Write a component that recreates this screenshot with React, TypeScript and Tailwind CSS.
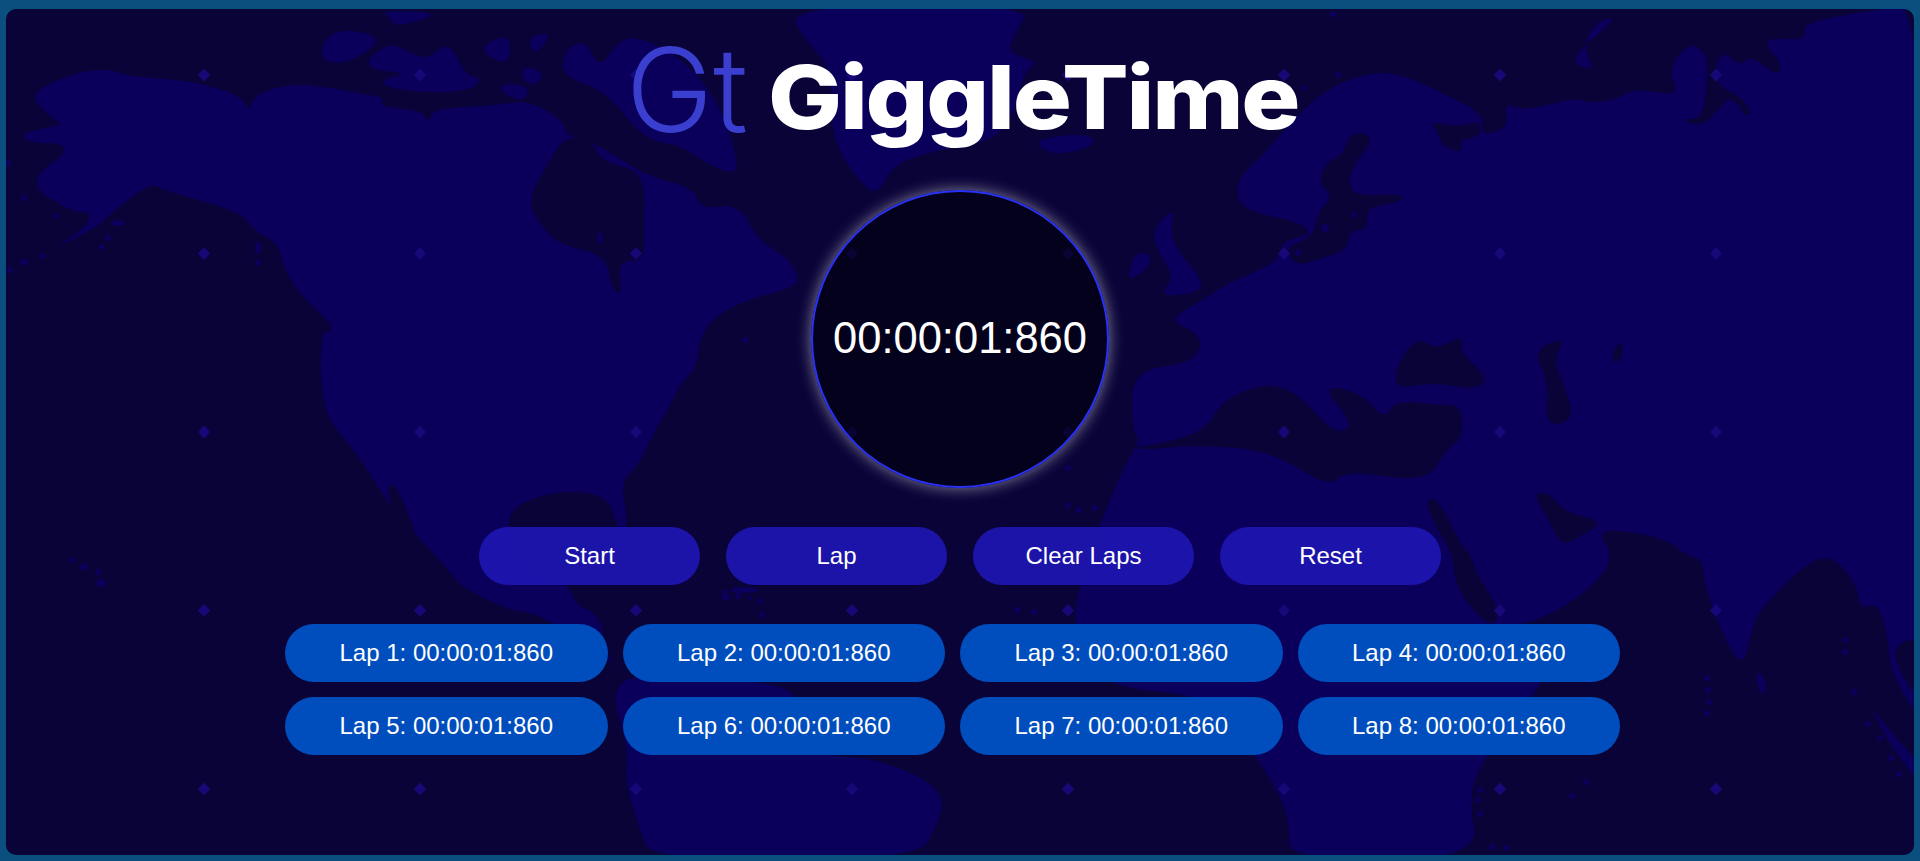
import React from 'react';

type Pt = [number, number];

const LAND = '#0a005c';
const SEA = '#0a0338';

const land: Pt[][] = [
  // north and central america
  [[29,98],[53,80],[102,67],[131,77],[188,80],[241,95],[249,113],[255,93],[300,82],[367,95],[384,97],[380,107],[420,110],[429,123],[433,110],[461,107],[500,105],[527,100],[563,120],[567,137],[590,140],[648,177],[693,187],[701,210],[738,203],[758,240],[787,258],[797,273],[797,287],[734,303],[701,330],[697,367],[681,383],[669,407],[650,440],[640,463],[620,483],[628,520],[622,535],[616,523],[608,497],[571,490],[531,498],[508,513],[510,540],[528,570],[570,585],[575,605],[600,615],[604,643],[610,660],[628,677],[604,655],[535,612],[514,612],[461,587],[451,573],[424,543],[392,510],[363,462],[337,430],[327,417],[320,377],[322,330],[331,333],[331,323],[298,293],[282,263],[278,243],[253,230],[241,212],[163,190],[151,183],[118,207],[98,227],[51,250],[86,227],[92,212],[73,212],[53,200],[37,190],[37,173],[65,155],[63,143],[29,143],[20,133],[63,125],[55,120]],
  // south america
  [[610,690],[640,672],[780,683],[800,700],[820,757],[868,757],[922,777],[944,797],[938,823],[918,860],[652,860],[640,830],[625,783],[629,750]],
  // arctic islands
  [[331,30],[367,32],[380,42],[359,57],[335,65],[318,55]],
  [[367,57],[392,43],[408,52],[428,60],[449,40],[465,75],[482,78],[471,90],[433,93],[388,88],[380,80],[408,73],[371,70]],
  [[396,27],[445,13],[380,10],[392,20]],
  [[478,47],[510,33],[510,60],[498,63]],
  [[527,37],[553,32],[535,57]],
  [[563,53],[584,38],[600,70],[618,40],[640,37],[685,60],[720,105],[735,150],[738,177],[700,160],[680,145],[644,140],[605,90],[563,77]],
  [[498,90],[506,83],[531,87],[522,103]],
  [[518,73],[531,65],[545,77],[531,87]],
  // greenland, iceland, british isles
  [[783,5],[811,47],[825,60],[832,87],[832,140],[860,183],[879,195],[893,163],[950,147],[995,140],[1015,110],[1025,70],[1040,62],[1007,53],[1015,33],[1032,5]],
  [[1032,140],[1080,133],[1097,140],[1085,150],[1050,155]],
  [[1126,283],[1134,253],[1150,253],[1150,267]],
  [[1154,227],[1175,207],[1170,233],[1179,253],[1203,280],[1198,293],[1158,297],[1175,277],[1155,247]],
  // eurasia and africa
  [[1240,210],[1236,180],[1265,153],[1317,93],[1374,70],[1411,78],[1435,90],[1484,113],[1480,137],[1509,127],[1504,103],[1521,110],[1549,105],[1574,98],[1590,103],[1615,100],[1635,88],[1680,97],[1668,70],[1688,43],[1704,50],[1708,67],[1704,110],[1696,120],[1680,118],[1700,128],[1721,107],[1729,97],[1741,107],[1743,115],[1753,115],[1741,97],[1721,87],[1713,73],[1723,50],[1741,67],[1750,55],[1778,77],[1782,63],[1766,47],[1770,38],[1807,40],[1802,23],[1872,10],[1925,5],[1925,640],[1900,640],[1892,660],[1925,710],[1914,712],[1890,670],[1888,637],[1878,602],[1860,610],[1858,587],[1833,555],[1806,563],[1758,612],[1753,627],[1741,675],[1706,593],[1702,558],[1688,557],[1664,537],[1594,527],[1615,557],[1590,590],[1541,620],[1510,625],[1530,640],[1558,642],[1541,687],[1484,757],[1468,797],[1480,860],[1288,860],[1290,825],[1280,795],[1260,763],[1250,750],[1211,695],[1097,687],[1073,623],[1079,590],[1101,520],[1126,463],[1140,440],[1132,430],[1132,370],[1195,363],[1203,335],[1167,320],[1203,300],[1228,283],[1277,263],[1283,240],[1312,235],[1300,222]],
  // sumatra, sri lanka, novaya zemlya
  [[1868,703],[1885,725],[1925,770],[1925,790],[1890,745]],
  [[1755,675],[1762,672],[1768,690],[1760,695]],
  [[1566,60],[1619,17],[1598,20],[1582,45],[1596,72]],
];

const seas: Pt[][] = [
  // hudson bay
  [[527,200],[551,158],[565,137],[590,138],[602,162],[645,172],[644,230],[644,262],[618,260],[622,295],[612,290],[606,255],[560,245],[540,225]],
  // gulf of california
  [[388,483],[398,487],[422,550],[404,537],[390,510]],
  // baltic
  [[1362,132],[1374,140],[1349,170],[1351,197],[1402,193],[1402,202],[1366,207],[1368,230],[1350,230],[1347,250],[1325,257],[1296,267],[1284,247],[1313,237],[1317,213],[1333,197],[1319,183],[1325,163],[1345,153],[1347,137]],
  // white sea
  [[1429,122],[1460,127],[1480,120],[1480,137],[1458,140],[1464,153],[1443,147],[1437,130]],
  // black sea, caspian, aral
  [[1419,337],[1435,350],[1464,335],[1460,353],[1488,377],[1476,390],[1431,382],[1394,390],[1398,360]],
  [[1533,350],[1566,337],[1553,360],[1566,390],[1574,420],[1545,427],[1549,383]],
  [[1612,352],[1622,340],[1622,358],[1614,364]],
  // mediterranean
  [[1128,447],[1150,446],[1205,432],[1222,400],[1268,382],[1300,395],[1335,435],[1355,425],[1320,385],[1360,392],[1385,420],[1395,400],[1440,405],[1462,405],[1462,440],[1447,448],[1427,483],[1345,470],[1329,488],[1270,450],[1190,445],[1150,450]],
  // red sea and persian gulf
  [[1425,498],[1439,500],[1458,540],[1472,557],[1476,573],[1496,603],[1498,623],[1484,623],[1455,587],[1453,553],[1435,527]],
  [[1533,493],[1549,493],[1566,513],[1594,518],[1598,527],[1578,537],[1562,547],[1545,513]],
];

// small islands drawn as dots on top of the sea
const islands: [number, number, number, number][] = [
  [73,560,3,3],[84,567,4,3],[98,572,3,3],[101,583,5,4],[24,198,3,3],[57,216,3,3],[108,238,3,3],[102,247,3,3],[43,256,3,3],[24,262,4,3],[10,270,3,3],[8,163,3,3],[118,223,7,3],[258,248,3,6],[258,263,3,3],
  [744,590,14,3],[726,597,5,3],[725,592,3,2],[725,598,2,2],[738,596,3,3],[750,598,2,2],[760,601,3,3],[762,615,3,3],[1017,610,3,3],[1034,612,3,3],[1068,468,3,3],[1068,505,3,3],[1079,510,3,3],[1095,508,3,3],
  [1480,790,3,3],[1478,800,3,3],[1480,814,3,3],[1492,847,3,3],[1506,848,3,3],[1572,796,3,3],[1586,782,3,3],[1707,678,3,3],[1708,690,3,3],[1709,702,3,3],[1707,713,3,3],[1845,640,3,3],[1845,652,3,3],[1854,692,3,3],[1868,724,3,3],[1880,738,3,3],[1891,758,3,3],[1899,774,3,3],
  [1303,88,3,3],[1338,75,3,3],[1333,14,3,3],[1325,195,3,3],[1354,215,3,3],[1325,228,4,4],[1298,253,3,3],
  [600,238,3,6],[603,275,3,5],[745,340,3,3],
];

const diamonds: Pt[] = [];
for (let k = 0; k < 8; k++) {
  for (let j = 0; j < 5; j++) {
    diamonds.push([204 + 216 * k, 75 + 178.5 * j]);
  }
}

// closes a point list into a curve through the edge midpoints, the coasts are soft in the picture
function smooth(points: Pt[]) {
  const mid = (a: Pt, b: Pt): Pt => [(a[0] + b[0]) / 2, (a[1] + b[1]) / 2];
  const start = mid(points[points.length - 1], points[0]);
  let d = `M${start[0]} ${start[1]}`;
  points.forEach((p, i) => {
    const m = mid(p, points[(i + 1) % points.length]);
    d += `Q${p[0]} ${p[1]} ${m[0]} ${m[1]}`;
  });
  return d + 'Z';
}

function WorldMap() {
  return (
    <svg className="absolute inset-0 h-full w-full" viewBox="6 9 1908 846" preserveAspectRatio="none">
      {land.map((p, i) => (
        <path key={i} d={smooth(p)} fill={LAND} />
      ))}
      {seas.map((p, i) => (
        <path key={i} d={smooth(p)} fill={SEA} />
      ))}
      {islands.map(([x, y, rx, ry], i) => (
        <ellipse key={i} cx={x} cy={y} rx={rx} ry={ry} fill={LAND} />
      ))}
      {diamonds.map(([x, y], i) => (
        <path key={i} d={`M${x} ${y - 6}L${x + 5.5} ${y}L${x} ${y + 6}L${x - 5.5} ${y}Z`} fill="#170878" stroke="#170878" strokeLinejoin="round" />
      ))}
    </svg>
  );
}

const buttons = ['Start', 'Lap', 'Clear Laps', 'Reset'];
const laps = [1, 2, 3, 4, 5, 6, 7, 8];

export default function App() {
  return (
    <div className="min-h-[861px] bg-[#0b4f7f] pt-[9px] pr-[6px] pb-[6px] pl-[6px] font-['Liberation_Sans',Arial,sans-serif] text-white">
      <div className="relative h-[846px] overflow-hidden rounded-[10px] bg-[#0a0338]">
        <WorldMap />
        <div className="relative flex flex-col items-center">
          <div className="flex h-[181px] w-full justify-center pl-[6px]">
            <span className="mt-[6px] ml-[-5px] h-[150px] w-[142px] font-['Inter',sans-serif] text-[117px] leading-[150px] font-light text-[#3a3fd0]">
              Gt
            </span>
            <h1 className="mt-[23px] h-[130px] w-[527px] origin-left scale-x-[1.12] font-['Inter',sans-serif] text-[88px] leading-[130px] font-extrabold tracking-[-2px] whitespace-nowrap">
              GiggleTime
            </h1>
          </div>

          <div className="flex h-[298px] w-[298px] items-center justify-center rounded-full border-2 border-[#2a33f5] bg-[#00000a]/60 text-[43.5px] shadow-[0_0_15px_rgba(255,255,255,0.5)]">
            00:00:01:860
          </div>

          <div className="mt-[39px] flex gap-[26px]">
            {buttons.map((label) => (
              <button key={label} className="h-[58px] w-[221px] rounded-[30px] bg-[#1d15ae]/95 text-[24px]">
                {label}
              </button>
            ))}
          </div>

          <div className="mt-[39px] grid w-[1350px] grid-cols-4 gap-[15px] pr-[15px]">
            {laps.map((n) => (
              <div key={n} className="flex h-[58px] items-center justify-center rounded-[30px] bg-[#0050c0]/98 text-[24px]">
                Lap {n}: 00:00:01:860
              </div>
            ))}
          </div>
        </div>
      </div>
    </div>
  );
}
